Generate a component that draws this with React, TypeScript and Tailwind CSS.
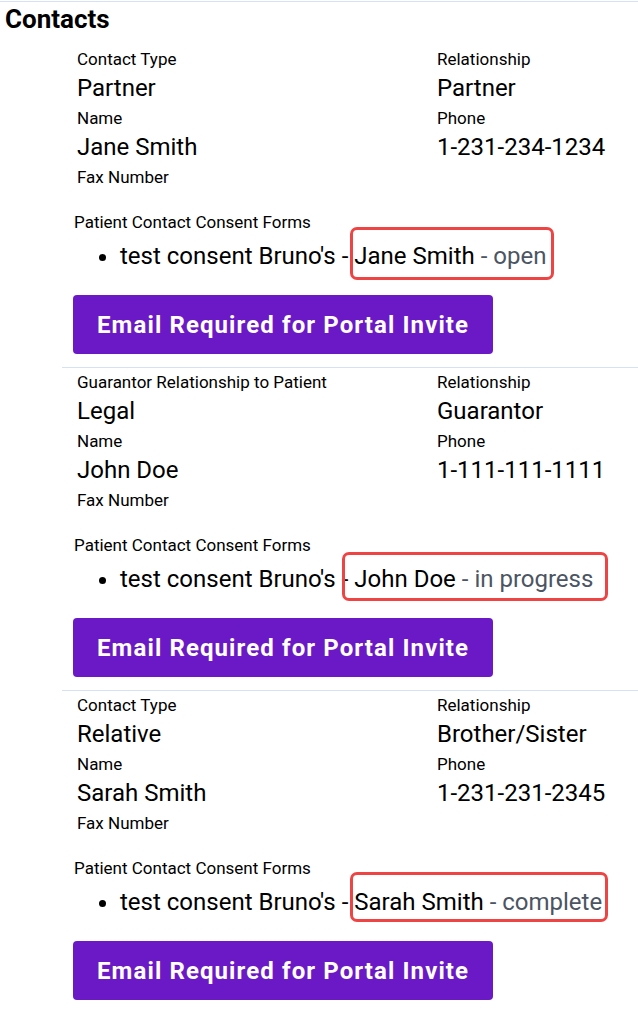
const contacts = [
  {
    typeLabel: "Contact Type",
    type: "Partner",
    relationship: "Partner",
    name: "Jane Smith",
    phone: "1-231-234-1234",
    status: "open",
    box: "-top-[12px] -bottom-[7px] -left-[4px] -right-[8px]",
  },
  {
    typeLabel: "Guarantor Relationship to Patient",
    type: "Legal",
    relationship: "Guarantor",
    name: "John Doe",
    phone: "1-111-111-1111",
    status: "in progress",
    box: "-top-[10px] -bottom-[5px] -left-[12px] -right-[15px]",
  },
  {
    typeLabel: "Contact Type",
    type: "Relative",
    relationship: "Brother/Sister",
    name: "Sarah Smith",
    phone: "1-231-231-2345",
    status: "complete",
    box: "-top-[13px] -bottom-[3px] -left-[4px] -right-[6px]",
  },
];

const Field = ({ label, value }: { label: string; value: string }) => (
  <div>
    <div className="text-[17px] leading-[24px] text-black">{label}</div>
    <div className="text-[24px] leading-[35px] text-black">{value}</div>
  </div>
);

export default function App() {
  return (
    <div className="min-h-screen bg-white pt-px font-['Roboto',sans-serif] text-black">
      <div className="border-t border-[#d6e1f1]">
        <h2 className="pl-[5px] pt-[1px] text-[26px] font-bold leading-[32px]">Contacts</h2>

        <div className="mt-[12px]">
          {contacts.map((c, i) => (
            <div
              key={c.name}
              className={
                i > 0 ? "ml-[62px] border-t border-[#d6e1f1] pt-[2px]" : "ml-[62px]"
              }
            >
              <div className="grid grid-cols-[360px_1fr] pl-[15px]">
                <Field label={c.typeLabel} value={c.type} />
                <Field label="Relationship" value={c.relationship} />
                <Field label="Name" value={c.name} />
                <Field label="Phone" value={c.phone} />
                <div className="text-[17px] leading-[24px]">Fax Number</div>
              </div>

              <div className="mt-[21px] pl-[12px]">
                <div className="text-[17px] leading-[24px]">Patient Contact Consent Forms</div>
                <ul className="mt-[5px] list-disc pl-[46px] text-[24px] leading-[34px]">
                  <li>
                    test consent Bruno's -{" "}
                    <span className="relative inline-block">
                      {c.name} <span className="text-[#4b5563]">- {c.status}</span>
                      <span
                        className={`pointer-events-none absolute rounded-[7px] border-[3px] border-[#ef4444] ${c.box}`}
                      />
                    </span>
                  </li>
                </ul>
              </div>

              <div className="pb-[13px] pl-[11px] pt-[22px]">
                <button className="h-[59px] rounded-[4px] bg-[#6b19c6] px-[24px] text-[24px] font-bold tracking-[1.1px] text-white">
                  Email Required for Portal Invite
                </button>
              </div>
            </div>
          ))}
        </div>
      </div>
    </div>
  );
}
